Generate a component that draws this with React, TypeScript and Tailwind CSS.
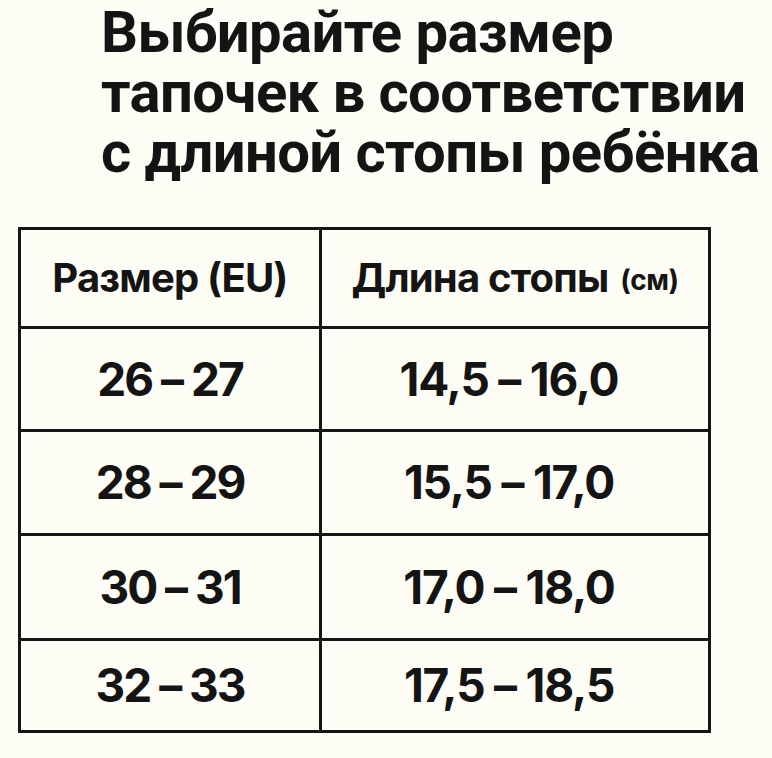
const rows = [
  { size: "26 – 27", foot: "14,5 – 16,0", h: "h-[103px]" },
  { size: "28 – 29", foot: "15,5 – 17,0", h: "h-[104px]" },
  { size: "30 – 31", foot: "17,0 – 18,0", h: "h-[105px]" },
  { size: "32 – 33", foot: "17,5 – 18,5", h: "h-[89px]" },
];

export default function App() {
  return (
    <div className="w-[772px] h-[758px] bg-[#fdfdf6] text-[#141414] overflow-hidden">
      <h1 className="pl-[101px] pt-[2px] font-['Roboto',sans-serif] font-bold text-[58px] leading-[60px] tracking-[-0.6px]">
        Выбирайте размер
        <br />
        тапочек в соответствии
        <br />с длиной стопы ребёнка
      </h1>

      <div className="mt-[45px] ml-[18px] w-[693px] border-[3px] border-[#151515] font-['Inter',sans-serif] font-bold">
        <div className="grid grid-cols-[301px_1fr] h-[99px] border-b-[3px] border-[#151515]">
          <div className="flex items-center justify-center border-r-[3px] border-[#151515] text-[40px] tracking-[-0.8px]">
            Размер (EU)
          </div>
          <div className="flex items-center justify-center text-[40px] tracking-[-0.8px]">
            Длина стопы
            <span className="ml-[12px] mt-[4px] text-[28px] tracking-[-0.5px]">(см)</span>
          </div>
        </div>
        {rows.map((r, i) => (
          <div
            key={r.size}
            className={`grid grid-cols-[301px_1fr] ${r.h} ${
              i < rows.length - 1 ? "border-b-[3px] border-[#151515]" : ""
            }`}
          >
            <div className="flex items-center justify-center border-r-[3px] border-[#151515] text-[46px] tracking-[-2px]">
              {r.size}
            </div>
            <div className="flex items-center justify-center text-[46px] tracking-[-1.2px] pr-[12px]">
              {r.foot}
            </div>
          </div>
        ))}
      </div>
    </div>
  );
}
